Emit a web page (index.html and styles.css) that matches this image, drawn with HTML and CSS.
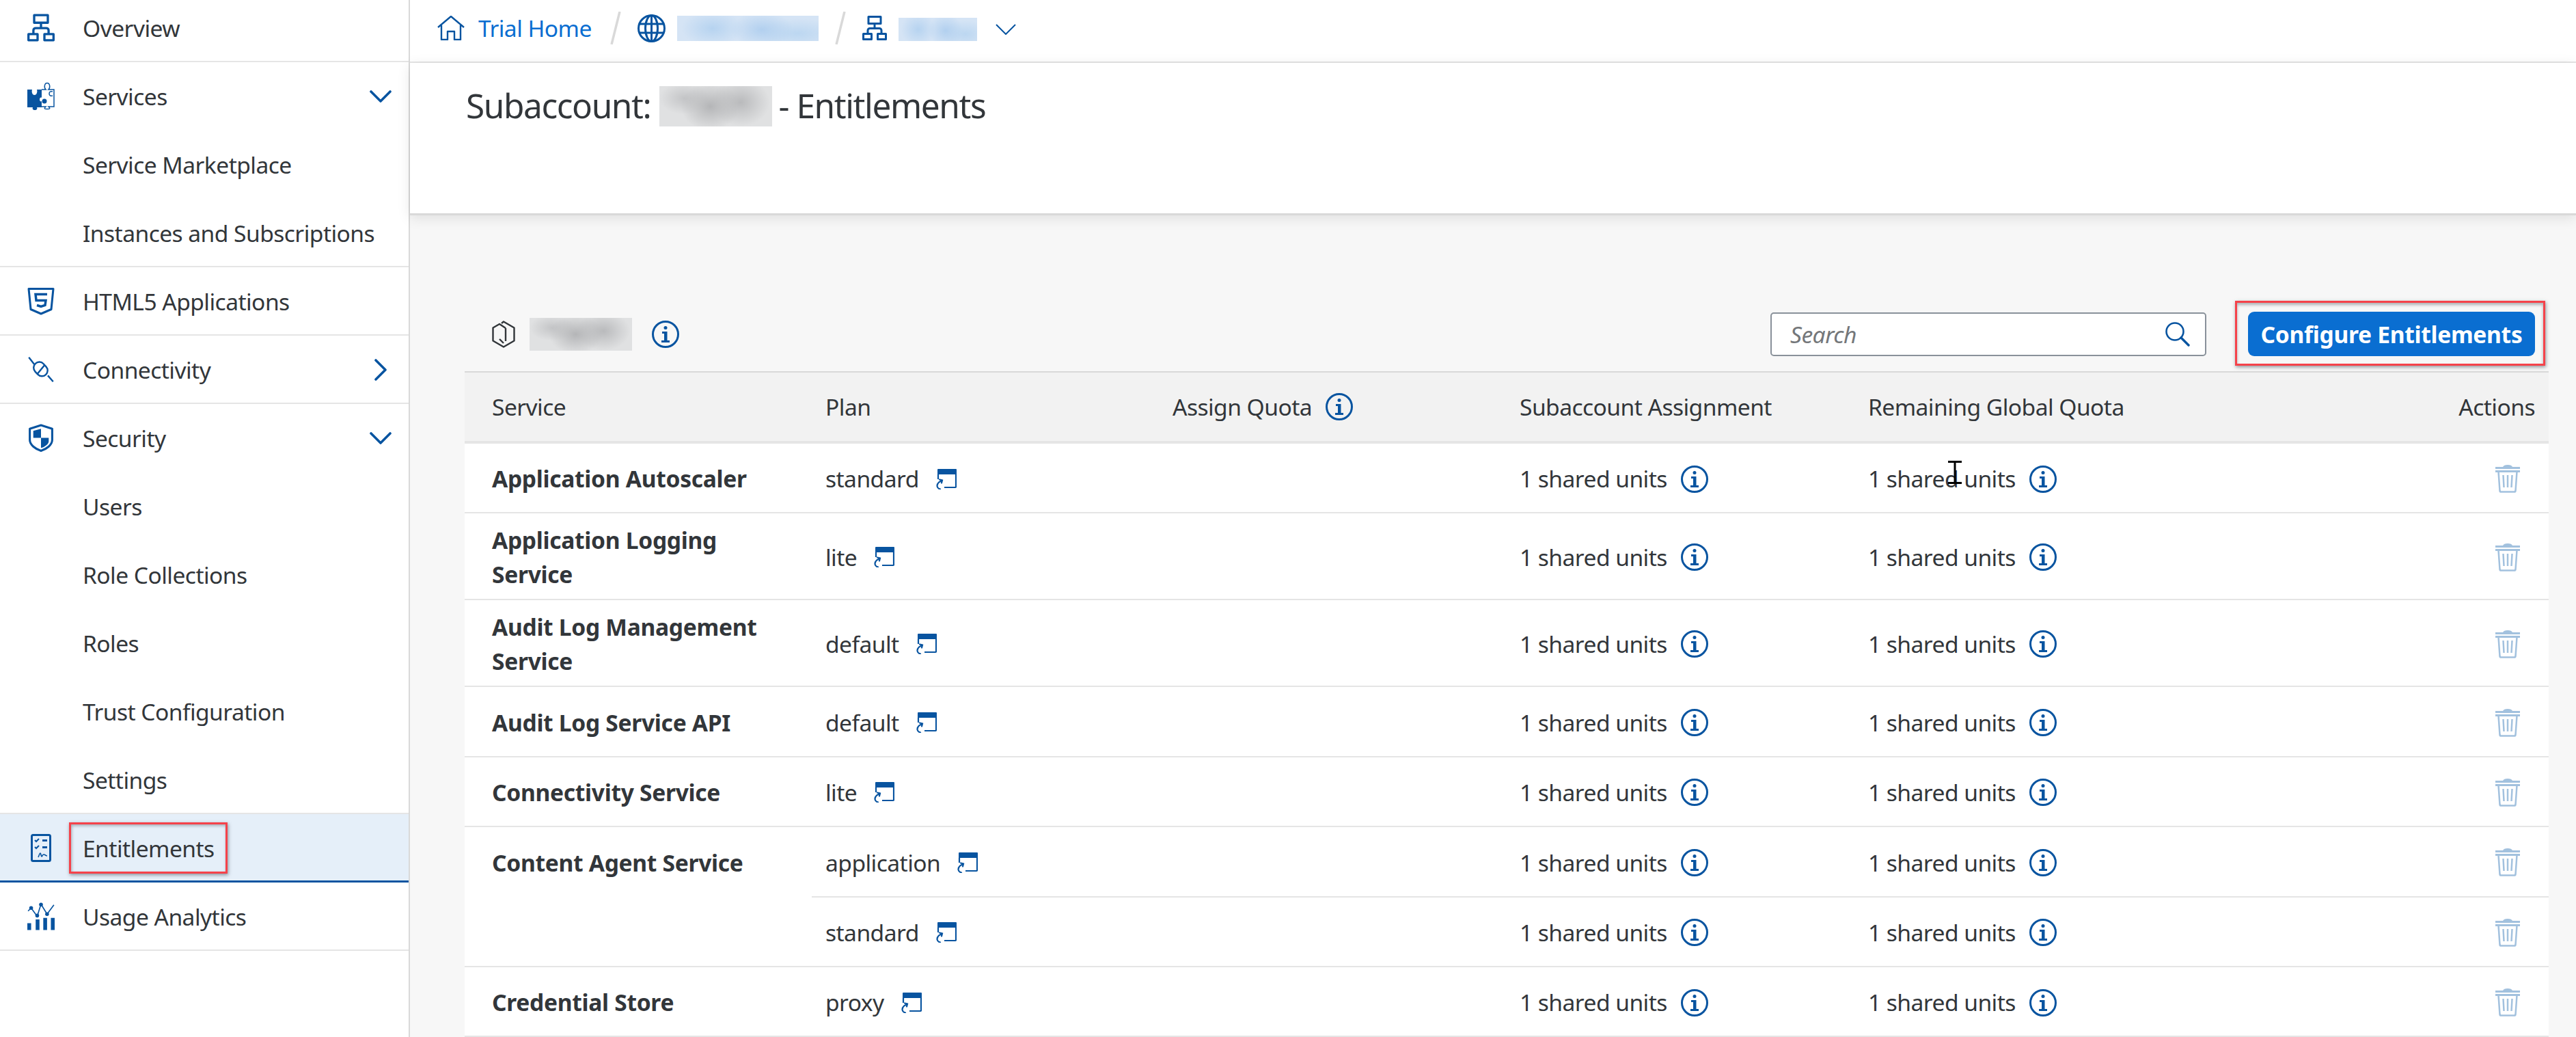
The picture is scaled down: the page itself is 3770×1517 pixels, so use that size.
FILE: index.html
```html
<!DOCTYPE html>
<html lang="en">
<head>
<meta charset="utf-8">
<title>Subaccount - Entitlements</title>
<link rel="stylesheet" href="styles.css">
</head>
<body>
<svg class="sprite" xmlns="http://www.w3.org/2000/svg">
  <symbol id="i-tree" viewBox="0 0 36 36">
    <path fill="none" stroke="currentColor" stroke-width="3" stroke-linejoin="round" d="M9 1.500h18v10H9zM18 11.500v7M8 26.500v-5a3 3 0 0 1 3-3h14a3 3 0 0 1 3 3v5M1.500 26.500h12v8h-12zM22.500 26.500h12v8h-12z"/>
  </symbol>
  <symbol id="i-info" viewBox="0 0 40 40">
    <circle cx="20" cy="20" r="18.500" fill="none" stroke="currentColor" stroke-width="3"/>
    <circle cx="20" cy="10.500" r="2.500" fill="currentColor"/>
    <path fill="currentColor" d="M15 16h7.500v13H26v3H14v-3h4V19h-3z"/>
  </symbol>
  <symbol id="i-app" viewBox="0 0 30 30">
    <path fill="currentColor" d="M3 0h26a1 1 0 0 1 1 1v7H2V1a1 1 0 0 1 1-1z"/>
    <path fill="none" stroke="currentColor" stroke-width="2.200" d="M3 8v7M29 8v18a1 1 0 0 1-1 1H12"/>
    <path fill="none" stroke="currentColor" stroke-width="2.200" stroke-linecap="round" d="M6 29.500c-5-1-6-6-2-10l5-3M5 15.500l4 1-1 4"/>
  </symbol>
  <symbol id="i-trash" viewBox="0 0 36 41">
    <path fill="currentColor" d="M11 3c1-2 3-3 7-3s6 1 7 3zM0 3h36v3H0zM0 8h36v3H0z"/>
    <path fill="none" stroke="currentColor" stroke-width="2.500" d="M4.500 10l2 28q.2 1.500 1.800 1.500h19.400q1.600 0 1.800-1.500l2-28M11.500 15l1 18M18 15v18M24.500 15l-1 18"/>
  </symbol>
</svg>

<div class="app">
  <nav class="sidebar">
    <a class="nav-row nav-first sep"><svg class="nav-icon"><use href="#i-tree"/></svg><span>Overview</span></a>
    <a class="nav-row">
      <svg class="nav-icon" viewBox="0 0 40 41">
        <path fill="currentColor" d="M0 11h7c-1 3 0 8 3.500 8s4.500-5 3.500-8h7v12c-1-1-3 0-3 2.500s2 3.500 3 2.500v9H14c1 2 0 4-3 4s-4-2-3-4H0z"/>
        <circle cx="25" cy="28" r="3.500" fill="currentColor"/>
        <path fill="none" stroke="currentColor" stroke-width="1.500" d="M21 11h6c-3-3-2-9.500 2-9.500s5 6.500 2 9.500h8v25h-8c3 3 2 3.500-2 3.500s-5-.5-2-3.500h-6M37 14c-3-1-5 .5-5 3s2 4 5 3"/>
      </svg>
      <span>Services</span>
      <svg class="chev" viewBox="0 0 32 20"><path d="M2 3l14 14L30 3"/></svg>
    </a>
    <a class="nav-row">Service Marketplace</a>
    <a class="nav-row sep">Instances and Subscriptions</a>
    <a class="nav-row sep">
      <svg class="nav-icon" viewBox="0 0 40 40">
        <path fill="none" stroke="currentColor" stroke-width="3" stroke-linejoin="round" d="M2 2h36l-3 30-15 6.500L5 32z"/>
        <path fill="none" stroke="currentColor" stroke-width="3.500" d="M29 10H12l1 9h14l-1 7-6 2-6-2"/>
      </svg>
      <span>HTML5 Applications</span>
    </a>
    <a class="nav-row sep">
      <svg class="nav-icon" viewBox="0 0 36 34">
        <g fill="none" stroke="currentColor" stroke-width="2.200">
          <path d="M2 1l7 9M27 25l7 8"/>
          <rect x="7.500" y="9" width="20" height="15" rx="7.500" transform="rotate(47 17.500 16.500)"/>
          <path d="M13 23L23 11"/>
        </g>
      </svg>
      <span>Connectivity</span>
      <svg class="chev chev-right" viewBox="0 0 20 32"><path d="M3 2l14 14L3 30"/></svg>
    </a>
    <a class="nav-row">
      <svg class="nav-icon" viewBox="0 0 36 40">
        <path fill="none" stroke="currentColor" stroke-width="3" stroke-linejoin="round" d="M18 2l16 5v16c0 7-8 13-16 15.500C10 36 2 30 2 23V7z"/>
        <path fill="currentColor" d="M7 10l11-3v13H7zM18 20h11v5c0 4-6 8-11 9.500z"/>
      </svg>
      <span>Security</span>
      <svg class="chev" viewBox="0 0 32 20"><path d="M2 3l14 14L30 3"/></svg>
    </a>
    <a class="nav-row">Users</a>
    <a class="nav-row">Role Collections</a>
    <a class="nav-row">Roles</a>
    <a class="nav-row">Trust Configuration</a>
    <a class="nav-row sep">Settings</a>
    <a class="nav-row nav-active">
      <svg class="nav-icon" viewBox="0 0 30 41">
        <rect x="1.500" y="1.500" width="27" height="38" rx="2" fill="none" stroke="currentColor" stroke-width="3"/>
        <path fill="none" stroke="currentColor" stroke-width="2" d="M6 9l2 2 4-4M6 19l2 2 4-4"/>
        <path fill="currentColor" d="M17 8h7v3h-7zM17 18h7v3h-7z"/>
        <path fill="none" stroke="currentColor" stroke-width="1.600" d="M11 34c1-2 2-6 3-6s1 5 2 5 1-3 3-3 3 2 5 2"/>
      </svg>
      <span>Entitlements</span>
      <i class="mark mark-nav"></i>
    </a>
    <a class="nav-row sep">
      <svg class="nav-icon" viewBox="0 0 36 36">
        <path fill="currentColor" d="M0 27h5v9H0zM11 22h5v14h-5zM21 20h5v16h-5zM31 20h5v16h-5z"/>
        <path fill="none" stroke="currentColor" stroke-width="1.500" d="M1 11l4-4 8 11 5-16 8 13 9-12"/>
        <circle cx="5" cy="7" r="2.500" fill="currentColor"/><circle cx="13" cy="17" r="2.500" fill="currentColor"/><circle cx="18" cy="2.500" r="2.500" fill="currentColor"/><circle cx="26" cy="15" r="2.500" fill="currentColor"/>
      </svg>
      <span>Usage Analytics</span>
    </a>
  </nav>

  <main class="main">
    <header class="crumbs">
      <svg class="crumb-home" viewBox="0 0 40 36">
        <path fill="none" stroke="currentColor" stroke-width="2.400" stroke-linejoin="round" d="M1 17L20 1l19 16M6 14v21h9V23h10v12h9V14"/>
      </svg>
      <a class="crumb-link">Trial Home</a>
      <svg class="crumb-slash" viewBox="0 0 16 48"><path d="M14 0L2 48"/></svg>
      <svg class="crumb-globe" viewBox="0 0 41 41">
        <g fill="none" stroke="currentColor" stroke-width="3">
          <ellipse cx="20.500" cy="20.500" rx="19" ry="19"/>
          <ellipse cx="20.500" cy="20.500" rx="9" ry="19"/>
          <path d="M20.500 1.500v38M2 14h37M2 27h37"/>
        </g>
      </svg>
      <span class="smudge smudge-blue smudge-global"></span>
      <svg class="crumb-slash crumb-slash-2" viewBox="0 0 16 48"><path d="M14 0L2 48"/></svg>
      <svg class="crumb-tree"><use href="#i-tree"/></svg>
      <span class="smudge smudge-blue smudge-sub"></span>
      <svg class="crumb-chev" viewBox="0 0 30 16"><path d="M1 1l14 14L29 1"/></svg>
    </header>

    <section class="title-bar">
      <h1 class="title">Subaccount:<span class="smudge smudge-grey smudge-title"></span>- Entitlements</h1>
    </section>

    <section class="content">
      <div class="toolbar">
        <svg class="hex" viewBox="0 0 34 40">
          <path fill="none" stroke="currentColor" stroke-width="2.400" stroke-linejoin="round" d="M14 4l3-2.500 15.500 9v19L17 38.500 1.500 29.500v-19L11 5l9 6M20 11v19M17 33l-6-6"/>
        </svg>
        <span class="smudge smudge-grey smudge-dir"></span>
        <svg class="info info-dir"><use href="#i-info"/></svg>
        <div class="search">
          <span class="search-text">Search</span>
          <svg class="search-icon" viewBox="0 0 36 36">
            <circle cx="14" cy="14" r="12.500" fill="none" stroke="currentColor" stroke-width="2.600"/>
            <path fill="none" stroke="currentColor" stroke-width="3.400" stroke-linecap="round" d="M23 23l11 11"/>
          </svg>
        </div>
        <button class="btn" type="button">Configure Entitlements<i class="mark mark-btn"></i></button>
      </div>

      <table class="grid">
        <colgroup><col class="col"><col class="col"><col class="col"><col class="col"><col class="col"><col></colgroup>
        <thead>
          <tr>
            <th class="c-name">Service</th>
            <th>Plan</th>
            <th><span class="with-info">Assign Quota<svg class="info"><use href="#i-info"/></svg></span></th>
            <th>Subaccount Assignment</th>
            <th class="c-rem">Remaining Global Quota</th>
            <th class="c-act">Actions</th>
          </tr>
        </thead>
        <tbody>
          <tr>
            <td class="c-name">Application Autoscaler</td>
            <td><span class="plan">standard<svg class="app-icon"><use href="#i-app"/></svg></span></td>
            <td></td>
            <td><span class="units">1 shared units<svg class="info"><use href="#i-info"/></svg></span></td>
            <td class="c-rem"><span class="units">1 shared units<svg class="info"><use href="#i-info"/></svg></span></td>
            <td class="c-act"><svg class="trash"><use href="#i-trash"/></svg></td>
          </tr>
          <tr class="tall">
            <td class="c-name">Application Logging Service</td>
            <td><span class="plan">lite<svg class="app-icon"><use href="#i-app"/></svg></span></td>
            <td></td>
            <td><span class="units">1 shared units<svg class="info"><use href="#i-info"/></svg></span></td>
            <td class="c-rem"><span class="units">1 shared units<svg class="info"><use href="#i-info"/></svg></span></td>
            <td class="c-act"><svg class="trash"><use href="#i-trash"/></svg></td>
          </tr>
          <tr class="tall">
            <td class="c-name">Audit Log Management Service</td>
            <td><span class="plan">default<svg class="app-icon"><use href="#i-app"/></svg></span></td>
            <td></td>
            <td><span class="units">1 shared units<svg class="info"><use href="#i-info"/></svg></span></td>
            <td class="c-rem"><span class="units">1 shared units<svg class="info"><use href="#i-info"/></svg></span></td>
            <td class="c-act"><svg class="trash"><use href="#i-trash"/></svg></td>
          </tr>
          <tr>
            <td class="c-name">Audit Log Service API</td>
            <td><span class="plan">default<svg class="app-icon"><use href="#i-app"/></svg></span></td>
            <td></td>
            <td><span class="units">1 shared units<svg class="info"><use href="#i-info"/></svg></span></td>
            <td class="c-rem"><span class="units">1 shared units<svg class="info"><use href="#i-info"/></svg></span></td>
            <td class="c-act"><svg class="trash"><use href="#i-trash"/></svg></td>
          </tr>
          <tr>
            <td class="c-name">Connectivity Service</td>
            <td><span class="plan">lite<svg class="app-icon"><use href="#i-app"/></svg></span></td>
            <td></td>
            <td><span class="units">1 shared units<svg class="info"><use href="#i-info"/></svg></span></td>
            <td class="c-rem"><span class="units">1 shared units<svg class="info"><use href="#i-info"/></svg></span></td>
            <td class="c-act"><svg class="trash"><use href="#i-trash"/></svg></td>
          </tr>
          <tr>
            <td class="c-name c-span" rowspan="2">Content Agent Service</td>
            <td><span class="plan">application<svg class="app-icon"><use href="#i-app"/></svg></span></td>
            <td></td>
            <td><span class="units">1 shared units<svg class="info"><use href="#i-info"/></svg></span></td>
            <td class="c-rem"><span class="units">1 shared units<svg class="info"><use href="#i-info"/></svg></span></td>
            <td class="c-act"><svg class="trash"><use href="#i-trash"/></svg></td>
          </tr>
          <tr>
            <td><span class="plan">standard<svg class="app-icon"><use href="#i-app"/></svg></span></td>
            <td></td>
            <td><span class="units">1 shared units<svg class="info"><use href="#i-info"/></svg></span></td>
            <td class="c-rem"><span class="units">1 shared units<svg class="info"><use href="#i-info"/></svg></span></td>
            <td class="c-act"><svg class="trash"><use href="#i-trash"/></svg></td>
          </tr>
          <tr>
            <td class="c-name">Credential Store</td>
            <td><span class="plan">proxy<svg class="app-icon"><use href="#i-app"/></svg></span></td>
            <td></td>
            <td><span class="units">1 shared units<svg class="info"><use href="#i-info"/></svg></span></td>
            <td class="c-rem"><span class="units">1 shared units<svg class="info"><use href="#i-info"/></svg></span></td>
            <td class="c-act"><svg class="trash"><use href="#i-trash"/></svg></td>
          </tr>
        </tbody>
      </table>
    </section>
  </main>
</div>

<svg class="cursor" viewBox="0 0 20 34"><path d="M0 1.500h20M0 32.500h20M10 1.500v31"/></svg>
</body>
</html>
```
FILE: styles.css
```css
* { box-sizing: border-box; }
html, body { margin: 0; padding: 0; }
body {
  width: 3770px;
  height: 1517px;
  overflow: hidden;
  position: relative;
  background: #fff;
  color: #32363a;
  font-family: "Noto Sans", "Open Sans", sans-serif;
  font-size: 33.600px;
  letter-spacing: -0.550px;
}
.sprite { display: none; }

.app { display: flex; height: 1517px; }

/* Sidebar */
.sidebar {
  flex: 0 0 600px;
  height: 100%;
  overflow: hidden;
  background: #fff;
  border-right: 2px solid #d9d9d9;
}
.nav-row {
  position: relative;
  display: flex;
  align-items: center;
  height: 100px;
  padding-left: 121px;
  color: #32363a;
}
.nav-first { margin-top: -9px; }
.sep { box-shadow: inset 0 -2px 0 #e5e5e5; }
.nav-icon {
  position: absolute;
  left: 40px;
  top: 50%;
  width: 40px;
  height: 41px;
  margin-top: -21px;
  color: #0854a0;
}
.chev {
  position: absolute;
  right: 25px;
  top: 50%;
  width: 32px;
  height: 20px;
  margin-top: -10px;
  fill: none;
  stroke: #0854a0;
  stroke-width: 3.600;
  stroke-linecap: round;
  stroke-linejoin: round;
}
.chev-right { right: 31px; width: 20px; height: 32px; margin-top: -16px; }
.nav-active {
  background: #e5eff9;
  box-shadow: inset 0 -3px 0 #0854a0;
}
.mark {
  position: absolute;
  display: block;
  border: 3px solid #f5424a;
  box-shadow: 1px 2px 5px rgba(60, 70, 80, .55), inset 1px 2px 4px rgba(60, 70, 80, .4);
  pointer-events: none;
}
.mark-nav { left: 101px; top: 12px; width: 232px; height: 75px; }

/* Main column */
.main { flex: 1 1 auto; display: flex; flex-direction: column; min-width: 0; }
.crumbs {
  flex: 0 0 92px;
  display: flex;
  align-items: center;
  padding: 0 0 8px 40px;
  border-bottom: 2px solid #e5e5e5;
  color: #0854a0;
}
.crumb-home { width: 40px; height: 36px; margin-right: 20px; }
.crumb-link { color: #0a6ed1; width: 165px; white-space: nowrap; }
.crumb-slash {
  width: 16px;
  height: 48px;
  margin: 0 24px 0 28px;
  fill: none;
  stroke: #d9d9d9;
  stroke-width: 3.500;
}
.crumb-slash-2 { margin: 0 24px 0 24px; }
.crumb-globe { width: 41px; height: 41px; margin-right: 17px; }
.crumb-tree { width: 36px; height: 36px; margin-right: 17px; }
.crumb-chev {
  width: 30px;
  height: 16px;
  margin: 4px 0 0 27px;
  fill: none;
  stroke: #0854a0;
  stroke-width: 2;
}

.smudge { display: inline-block; flex: none; }
.smudge-blue {
  background:
    radial-gradient(ellipse 22% 70% at 25% 50%, #b6d3f0, transparent),
    radial-gradient(ellipse 22% 70% at 60% 55%, #b2d0ef, transparent),
    radial-gradient(ellipse 30% 60% at 85% 70%, #bcd7f1, transparent),
    #d5e4f5;
}
.smudge-grey {
  background:
    radial-gradient(ellipse 26% 60% at 45% 50%, #b4b5b7, transparent),
    radial-gradient(ellipse 26% 60% at 72% 40%, #b9babc, transparent),
    radial-gradient(ellipse 22% 40% at 22% 30%, #c4c5c7, transparent),
    #e0e1e2;
}
.smudge-global { width: 207px; height: 37px; }
.smudge-sub { width: 115px; height: 34px; margin-top: 3px; }
.smudge-title { width: 165px; height: 59px; margin: 4px 9px 0 13px; }
.smudge-dir { width: 150px; height: 48px; margin: 0 29px 0 21px; }

.title-bar {
  flex: 0 0 223px;
  padding: 32px 0 0 82px;
  background: #fff;
  border-bottom: 3px solid #d9d9d9;
  box-shadow: 0 4px 18px rgba(0, 0, 0, .1);
  position: relative;
}
.title {
  display: flex;
  align-items: center;
  height: 59px;
  margin: 0;
  font-size: 49.500px;
  letter-spacing: -1.400px;
  font-weight: 400;
  color: #32363a;
}

.content {
  flex: 1 1 auto;
  min-height: 0;
  background: #f7f7f7;
  padding: 141px 40px 0 80px;
}
.toolbar {
  display: flex;
  align-items: center;
  height: 65px;
  margin-bottom: 22px;
  padding: 0 20px 0 40px;
}
.hex { width: 34px; height: 40px; color: #32363a; }
.info { width: 40px; height: 40px; color: #0854a0; flex: none; }
.info-dir { margin-right: auto; }
.search {
  display: flex;
  align-items: center;
  justify-content: space-between;
  width: 638px;
  height: 64px;
  margin-right: 61px;
  padding: 0 22px 0 27px;
  background: #fff;
  border: 2px solid #89919a;
  border-radius: 5px;
}
.search-text { font-style: italic; color: #74777a; }
.search-icon { width: 36px; height: 36px; color: #0854a0; }
.btn {
  position: relative;
  width: 420px;
  height: 65px;
  padding: 0;
  border: 0;
  border-radius: 9px;
  background: #0a6ed1;
  color: #fff;
  font: 700 33.600px "Noto Sans", "Open Sans", sans-serif;
  letter-spacing: -0.300px;
}
.mark-btn { left: -19px; top: -16px; width: 454px; height: 95px; box-shadow: 1px 2px 5px rgba(60, 70, 80, .55), inset 0 3px 4px rgba(60, 70, 80, .4); }

/* Table */
.grid {
  width: 3050px;
  table-layout: fixed;
  border-collapse: separate;
  border-spacing: 0;
  background: #fff;
}
.col { width: 508px; }
.grid th {
  height: 106px;
  padding: 0 20px;
  text-align: left;
  font-weight: 400;
  background: #f2f2f2;
  border-top: 2px solid #d9d9d9;
  border-bottom: 4px solid #e5e5e5;
}
.grid td {
  height: 102.400px;
  padding: 3px 20px 0;
  border-bottom: 2px solid #e5e5e5;
  line-height: 50.500px;
  vertical-align: middle;
}
.grid .tall td { height: 127px; }
.grid .c-name { padding-left: 40px; }
.grid .c-rem { padding-left: 22px; }
.grid td.c-name { font-weight: 700; letter-spacing: -0.300px; }
.grid td.c-span { vertical-align: top; padding-top: 27px; }
.grid .c-act { text-align: right; }
.with-info, .units, .plan { display: inline-flex; align-items: center; }
.with-info { gap: 20px; }
.units { gap: 20px; }
.plan { gap: 25px; }
.app-icon { width: 30px; height: 30px; color: #0854a0; flex: none; }
.trash { display: block; width: 36px; height: 41px; margin: 0 22px 0 auto; color: #a2c1de; }

.cursor {
  position: absolute;
  left: 2851px;
  top: 674px;
  width: 20px;
  height: 34px;
  fill: none;
  stroke: #000;
  stroke-width: 3;
}
```
